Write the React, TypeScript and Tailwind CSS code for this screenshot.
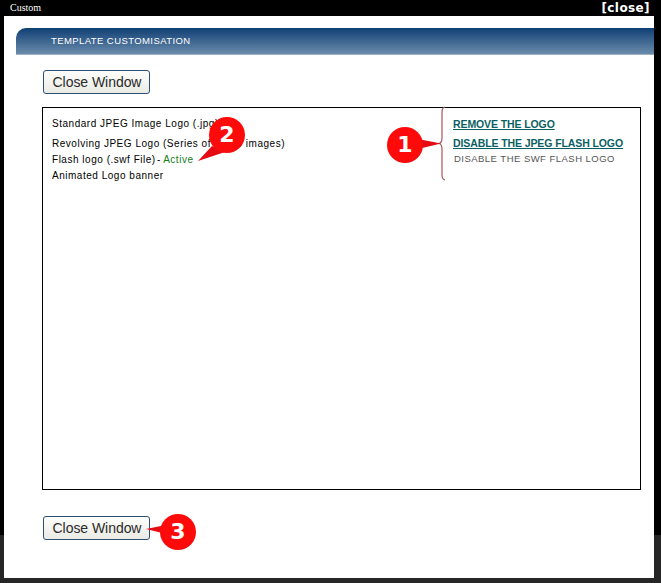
function Badge({ n, className }: { n: string; className: string }) {
  return (
    <div className={`absolute flex h-[36px] w-[36px] items-center justify-center rounded-full bg-[radial-gradient(circle_at_50%_45%,#ff0a0a_60%,#d8141a_100%)] font-['DejaVu_Sans',sans-serif] text-[22px] font-bold leading-none text-white ${className}`}>
      {n}
    </div>
  );
}

function CloseButton() {
  return (
    <button className="flex h-[24px] w-[107px] items-center justify-center rounded-[3px] border border-[#2c4f78] bg-gradient-to-b from-[#fdfdfb] to-[#ebebe5] pl-[1px] font-['Liberation_Sans',sans-serif] text-[14px] leading-none tracking-[-0.05px] text-[#2a2a2a]">
      Close Window
    </button>
  );
}

export default function App() {
  const row = "font-['Liberation_Sans',sans-serif] text-[10px] leading-[12px] tracking-[0.52px] text-black";
  const link = "whitespace-nowrap font-['Liberation_Sans',sans-serif] text-[10.5px] font-bold leading-[12px] tracking-[-0.1px] text-[#0b5f63] underline";
  return (
    <div className="relative h-[583px] w-[661px] overflow-hidden bg-[#262626]">
      <div className="h-[535px] w-full bg-black" />
      <div className="absolute left-[4px] top-0 flex h-[578px] w-[650px] flex-col bg-white">
        <div className="flex h-[16px] shrink-0 items-center justify-between bg-black pl-[6px] pr-[4px]">
          <span className="font-['Liberation_Serif',serif] text-[10px] leading-none text-white">Custom</span>
          <span className="font-['DejaVu_Sans',sans-serif] text-[12px] font-bold leading-none tracking-[0.4px] text-white">[close]</span>
        </div>
        <div className="ml-[12px] mt-[12px] flex h-[27px] shrink-0 items-center rounded-tl-[10px] border-b border-[#9fb0c0] bg-gradient-to-b from-[#0d3f74] to-[#6b8cab] pl-[35px]">
          <span className="font-['Liberation_Sans',sans-serif] text-[9.5px] leading-none tracking-[0.42px] text-white">TEMPLATE CUSTOMISATION</span>
        </div>
        <div className="ml-[39px] mt-[15px]">
          <CloseButton />
        </div>
        <div className="ml-[38px] mt-[13px] flex h-[383px] w-[599px] shrink-0 justify-between border border-black pl-[9px] pr-[16px] pt-[10px]">
          <div className="flex flex-col">
            <div className={`${row} mb-[8px]`}>Standard JPEG Image Logo (.jpg)</div>
            <div className={`${row} mb-[4px]`}>Revolving JPEG Logo (Series of JPEG images)</div>
            <div className={`${row} mb-[4px]`}>
              Flash logo (.swf File)<span className="ml-[-2px]"> -</span> <span className="ml-[-1px] text-[#15801a]">Active</span>
            </div>
            <div className={`${row} tracking-[0.32px]`}>Animated Logo banner</div>
          </div>
          <div className="flex w-[171px] flex-col">
            <a className={`${link} mb-[7px]`}>REMOVE THE LOGO</a>
            <a className={`${link} mb-[4px]`}>DISABLE THE JPEG FLASH LOGO</a>
            <span className="whitespace-nowrap pl-[1px] font-['Liberation_Sans',sans-serif] text-[9.5px] leading-[12px] tracking-[0.47px] text-[#555]">DISABLE THE SWF FLASH LOGO</span>
          </div>
        </div>
        <div className="ml-[39px] mt-[26px]">
          <CloseButton />
        </div>
      </div>

      {/* Annotations */}
      <svg className="absolute left-0 top-0" width="661" height="583" viewBox="0 0 661 583" fill="none">
        <path d="M445 107 C442 108 442 110 442 114 L442 138 C442 142 441 143 439 143.5 C441 144 442 145 442 149 L442 173 C442 177 442 179 445 180" stroke="#a8545a" strokeWidth="1.2" />
        <path d="M418 139 L441 143.5 L418 149 Z" fill="#e60b12" />
        <path d="M212 146 L198 161 L225 152 Z" fill="#e60b12" />
        <path d="M146 529 L166 525 L166 534 Z" fill="#e60b12" />
      </svg>
      <Badge n="1" className="left-[387px] top-[127px]" />
      <Badge n="2" className="left-[209px] top-[117px]" />
      <Badge n="3" className="left-[160px] top-[514px]" />
    </div>
  );
}
